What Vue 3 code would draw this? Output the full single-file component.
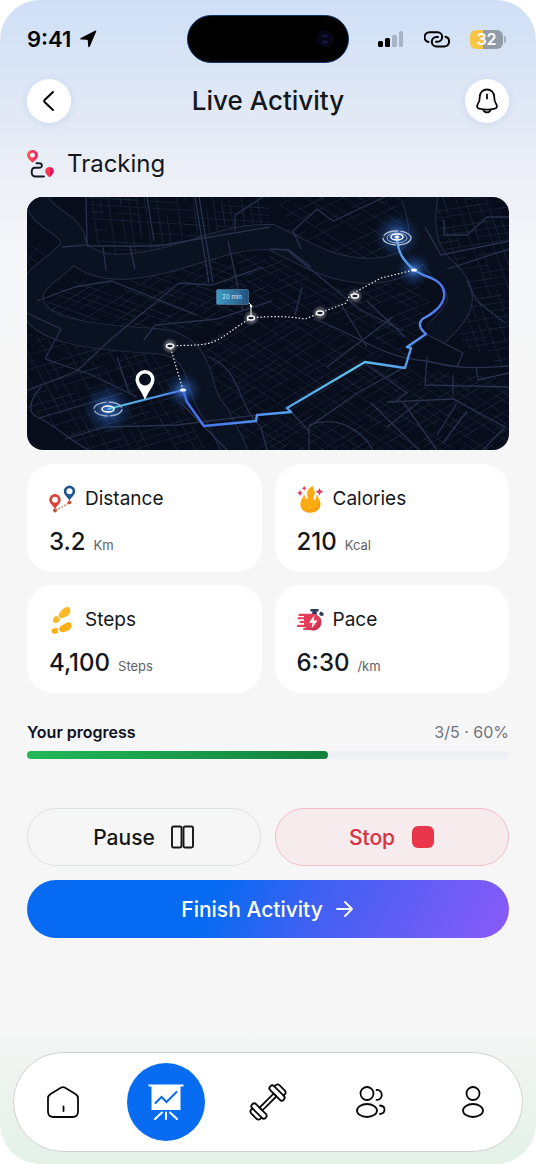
<script setup>
import { ref } from 'vue'

const activeTab = ref('activity')
const paused = ref(false)

// fill runs a little ahead of the whole-step percentage
const progress = { done: 3, total: 5, percent: 60, fill: 62.5 }

const stats = [
  { id: 'distance', label: 'Distance', value: '3.2', unit: 'Km' },
  { id: 'calories', label: 'Calories', value: '210', unit: 'Kcal' },
  { id: 'steps', label: 'Steps', value: '4,100', unit: 'Steps' },
  { id: 'pace', label: 'Pace', value: '6:30', unit: '/km' },
]

const tabs = [
  { id: 'home', label: 'Home' },
  { id: 'activity', label: 'Activity' },
  { id: 'workouts', label: 'Workouts' },
  { id: 'friends', label: 'Friends' },
  { id: 'profile', label: 'Profile' },
]

// City blocks: an outline and the directions its streets run in
const blocks = [
  { points: '62,0 243,0 243,36 200,40 150,55 105,66 80,62 66,40', dirs: [[1, 0.06, 8], [0.14, 1, 9]] },
  { points: '0,38 30,60 36,76 0,90', dirs: [[1, 0.7, 7], [-0.7, 1, 11]] },
  { points: '18,100 50,82 105,84 200,58 232,110 190,130 150,134 60,132 24,122', dirs: [[1, -0.62, 8], [1, 0.36, 7]] },
  { points: '0,136 50,150 135,152 155,190 178,253 60,253 0,210', dirs: [[1, -0.3, 8], [0.55, 1, 9]] },
  { points: '160,150 225,122 300,124 380,172 482,182 482,253 215,253 186,190', dirs: [[1, 0.65, 8], [1, -0.6, 7]] },
  { points: '250,0 376,0 374,50 340,66 300,60 262,34', dirs: [[1, 0.62, 9], [1, -0.5, 10]] },
  { points: '205,56 250,60 300,92 384,84 405,100 392,134 380,160 300,118 235,112', dirs: [[1, 0.6, 8], [1, -0.4, 8]] },
  { points: '412,0 482,0 482,172 440,150 420,130 436,90 400,50', dirs: [[1, -0.16, 8], [0.35, 1, 9]] },
]

// Broken parallel lines, long enough to cross the block on any side
const streets = blocks.map((block, b) => {
  const pts = block.points.split(' ').map((p) => p.split(',').map(Number))
  const cx = pts.reduce((sum, p) => sum + p[0], 0) / pts.length
  const cy = pts.reduce((sum, p) => sum + p[1], 0) / pts.length
  let d = ''
  block.dirs.forEach(([dx, dy, gap], k) => {
    const len = Math.hypot(dx, dy)
    const ux = dx / len
    const uy = dy / len
    for (let i = -22; i <= 22; i++) {
      const off = i * gap + ((i * 7 + b * 3 + k) % 4)
      for (let s = -160; s < 160; s += 34) {
        const jog = Math.abs(i * 13 + s * 5 + b * 11) % 9
        if (jog === 2) continue
        const x = cx - uy * off + ux * (s + jog)
        const y = cy + ux * off + uy * (s + jog)
        const run = 24 + jog * 3
        d += `M${x.toFixed(1)} ${y.toFixed(1)}l${(ux * run).toFixed(1)} ${(uy * run).toFixed(1)}`
      }
    }
  })
  return { id: `block-${b}`, points: block.points, d }
})
</script>

<template>
  <main class="screen">

    <!-- Status bar -->
    <div class="status-bar">
      <div class="status-left">
        <span class="clock">9:41</span>
        <svg width="18" height="18" viewBox="0 0 18 18" aria-hidden="true">
          <path d="M17.2 1.6 10.8 16.4Q9.8 18 9.2 16.2L8.8 10.6Q8.7 9.7 7.8 9.7L2 9.4Q.2 8.9 1.8 7.9L16 .8Q17.7.2 17.2 1.6z" fill="#000"/>
        </svg>
      </div>
      <div class="island">
        <svg width="18" height="18" viewBox="0 0 18 18" aria-hidden="true">
          <circle cx="9" cy="9" r="7.5" fill="#060612" stroke="#0e0c28"/>
          <rect x="5.5" y="4.5" width="7" height="3" rx="1.5" fill="#14133c"/>
          <rect x="5.5" y="10.5" width="7" height="3" rx="1.5" fill="#14133c"/>
        </svg>
      </div>
      <div class="status-right">
        <svg width="26" height="18" viewBox="0 0 26 18" aria-hidden="true">
          <rect x="0" y="11" width="5" height="6" rx="1.5" fill="#000"/>
          <rect x="7" y="8" width="5" height="9" rx="1.5" fill="#000"/>
          <rect x="14" y="5" width="5" height="12" rx="1.5" fill="#a8b4c6"/>
          <rect x="21" y="1" width="4" height="16" rx="1.5" fill="#a8b4c6"/>
        </svg>
        <svg width="26" height="17" viewBox="0 0 26 17" fill="none" stroke="#000" stroke-width="2" stroke-linecap="round" aria-hidden="true">
          <path d="M4.5 11A4.9 4.9 0 0 1 5.5 1.3H13.5a4.7 4.7 0 0 1 0 9.4H12"/>
          <path d="M14 6H12.5a4.7 4.7 0 0 0 0 9.4H20.5A4.9 4.9 0 0 0 21.5 5.8"/>
        </svg>
        <div class="battery">32</div>
      </div>
    </div>

    <!-- Header -->
    <header class="header">
      <button class="round-btn" aria-label="Back">
        <svg width="24" height="24" viewBox="0 0 24 24" fill="none" stroke="#000" stroke-width="2" stroke-linecap="round" stroke-linejoin="round" aria-hidden="true">
          <path d="M16 3 7.8 10.8Q6.6 12 7.8 13.2L16 21"/>
        </svg>
      </button>
      <h1 class="title">Live Activity</h1>
      <button class="round-btn" aria-label="Notifications">
        <svg width="26" height="28" viewBox="0 0 26 28" fill="none" stroke="#0c0c0c" stroke-width="1.8" stroke-linecap="round" stroke-linejoin="round" aria-hidden="true">
          <path d="M13 2.5c-4.2 0-7.2 3-7.2 7.2 0 4-.7 5.8-2.2 7.9-1.2 1.8-.4 3.6 1.6 4.1 5 1.3 10.6 1.3 15.6 0 2-.5 2.8-2.3 1.6-4.1-1.5-2.1-2.2-3.9-2.2-7.9 0-4.200-3-7.200-7.200-7.200z"/>
          <path d="M9.5 23.2c1.2 3 5.8 3 7 0M13 7.5v4"/>
        </svg>
      </button>
    </header>

    <section class="tracking">
      <h2 class="tracking-title">
        <svg width="28" height="28" viewBox="0 0 28 28" aria-hidden="true">
          <defs>
            <linearGradient id="pinA"><stop offset="0" stop-color="#fb6054"/><stop offset="1" stop-color="#ee1d62"/></linearGradient>
            <linearGradient id="pinB"><stop offset="0" stop-color="#f33b56"/><stop offset=".5" stop-color="#f33b56"/><stop offset=".5" stop-color="#e6115c"/></linearGradient>
          </defs>
          <path d="M5.5 0C2.4 0 0 2.3 0 5.3c0 2.800 3 5.200 5.500 7.500C8 10.500 11 8.100 11 5.300 11 2.300 8.600 0 5.500 0z" fill="url(#pinA)"/>
          <circle cx="5.5" cy="5.2" r="2.4" fill="#fff"/>
          <path d="M22.5 17c-2.5 0-4.3 1.8-4.3 4.2 0 2.200 2.300 4.300 4.300 6.200 2-1.900 4.300-4 4.300-6.200 0-2.400-1.800-4.200-4.300-4.200z" fill="url(#pinB)"/>
          <path d="M9.5 13.3H12c3.8 0 3.9 4.5 0 4.5H8c-4.3 0-4.5 8.7 0 8.7h9" fill="none" stroke="#161a22" stroke-width="1.9" stroke-linecap="round"/>
        </svg>
        <span>Tracking</span>
      </h2>

      <!-- Map -->
      <svg class="map" viewBox="0 0 482 253" role="img" aria-label="Route map">
        <defs>
          <radialGradient id="glow">
            <stop offset="0" stop-color="#4d8df5" stop-opacity=".85"/>
            <stop offset=".45" stop-color="#2b61b8" stop-opacity=".4"/>
            <stop offset="1" stop-color="#17386f" stop-opacity="0"/>
          </radialGradient>
          <radialGradient id="dotGlow">
            <stop offset="0" stop-color="#fff" stop-opacity=".6"/>
            <stop offset="1" stop-color="#fff" stop-opacity="0"/>
          </radialGradient>
          <linearGradient id="leg1"><stop offset="0" stop-color="#5bc8e8"/><stop offset="1" stop-color="#4a7ef0"/></linearGradient>
          <linearGradient id="leg2" gradientUnits="userSpaceOnUse" x1="156" y1="0" x2="417" y2="0">
            <stop offset="0" stop-color="#456cf0"/>
            <stop offset=".35" stop-color="#5399ec"/>
            <stop offset=".65" stop-color="#5cc6ea"/>
            <stop offset=".88" stop-color="#5596ee"/>
            <stop offset="1" stop-color="#4f72ee"/>
          </linearGradient>
          <linearGradient id="tag"><stop offset="0" stop-color="#3f9bc4"/><stop offset="1" stop-color="#24507f"/></linearGradient>
          <clipPath v-for="s in streets" :id="s.id" :key="s.id"><polygon :points="s.points"/></clipPath>
        </defs>

        <rect width="482" height="253" fill="#070d1a"/>

        <g fill="none" stroke="#1d263c" stroke-width=".7">
          <path v-for="s in streets" :key="s.id" :d="s.d" :clip-path="`url(#${s.id})`"/>
        </g>

        <!-- River -->
        <g fill="none" stroke="#252e48" stroke-width="26">
          <path d="M8 0C16 24 44 26 46 44 50 66 80 72 106 69 160 63 198 38 244 40 282 58 300 72 340 74 402 72 400 38 387 0"/>
          <path d="M46 52C22 78 0 82 4 106 12 134 60 140 128 144 182 148 164 190 190 218L212 262"/>
          <path d="M400-10C392 30 396 56 420 76 446 102 428 118 408 138"/>
        </g>
        <g fill="none" stroke="#0a1120" stroke-width="24">
          <path d="M8 0C16 24 44 26 46 44 50 66 80 72 106 69 160 63 198 38 244 40 282 58 300 72 340 74 402 72 400 38 387 0"/>
          <path d="M46 52C22 78 0 82 4 106 12 134 60 140 128 144 182 148 164 190 190 218L212 262"/>
          <path d="M400-10C392 30 396 56 420 76 446 102 428 118 408 138"/>
        </g>

        <!-- Main roads -->
        <g fill="none" stroke="#29324e" stroke-width="1.3">
          <path d="M168 0 182 86M172 0 186 86M201 44 216 114M59 0 60 48 35 50M76 50 79 73M103 49 108 72M120 0 127 44"/>
          <path d="M60 49H130L243 30M152 86 84 142 50 174 0 194M152 86 185 88 236 70M117 143 128 128 190 122 245 104"/>
          <path d="M10 104 48 90 84 84 170 118M18 162 65 178 110 200M18 162 34 132 0 116M90 160 102 196"/>
          <path d="M14 190C0 206 2 216 10 220 32 230 42 244 62 253M182 160C214 172 210 208 234 230L240 253"/>
          <path d="M38 242 78 230 150 228 230 218M12 221 96 196M154 206 200 253"/>
          <path d="M260 53 332 112 376 134M243 52 262 53 284 70M208 34V18L236 0M274 52 266 34 290 12 306 24 358 0"/>
          <path d="M286 122C330 136 350 160 400 164 438 174 460 170 482 169M399 137 436 156 430 170"/>
          <path d="M376 171 330 196 282 230 282 253M264 215 282 234M282 228C310 218 334 232 346 253"/>
          <path d="M360 205 426 202 478 230 456 253M400 160 398 188 482 190M426 178V198M449 170 451 183 482 176"/>
          <path d="M398 30 414 58 482 44M417 23V38H440L460 20H482M420 72 482 52M440 84 450 104 478 126"/>
          <path d="M314 107 340 150M275 90 268 118M340 104 378 140M300 170 366 120M340 168 380 196 366 206"/>
          <path d="M376 205 410 253M360 230 392 205M344 206 392 253M430 206 410 238M440 214 416 246"/>
        </g>

        <circle cx="81" cy="212" r="26" fill="url(#glow)"/>
        <circle cx="156" cy="193" r="19" fill="url(#glow)"/>
        <circle cx="370" cy="39" r="24" fill="url(#glow)"/>
        <circle cx="387" cy="73" r="18" fill="url(#glow)"/>

        <!-- Alternative route -->
        <path
          d="M156 193 143 149C158 148 170 149 183 146 196 142 208 130 224 121 244 119 260 119 278 122L293 116 319 106 323 98 354 81 387 73"
          fill="none" stroke="#eceef2" stroke-width="1.2" stroke-dasharray="1.5 2"
        />

        <!-- Covered route -->
        <path d="M81 212 156 193" fill="none" stroke="url(#leg1)" stroke-width="2"/>
        <path
          d="M156 193 160 205 177 229 229 224 230 218 264 215 260 211 338 165 378 171 384 151 380 150 399 137C390 130 392 123 399 120 424 106 421 88 404 81 398 79 392 76 387 73 376 63 371 56 370 41"
          fill="none" stroke="url(#leg2)" stroke-width="2.4" stroke-linejoin="round"
        />

        <g fill="none" stroke="#fff">
          <ellipse cx="81" cy="212" rx="14" ry="7" stroke="#9fb2ce" stroke-width="1.3" stroke-dasharray="15 2"/>
          <ellipse cx="81" cy="212" rx="6" ry="3" stroke-width="1.5"/>
          <ellipse cx="370" cy="41" rx="14" ry="7" stroke="#aebdd5" stroke-width="1.3" stroke-dasharray="16 2"/>
          <ellipse cx="370" cy="41" rx="10" ry="5" stroke="#9fb2ce" stroke-width="1"/>
          <ellipse cx="370" cy="40" rx="6" ry="3" stroke-width="1.5"/>
          <path d="M224 120V108L221 105" stroke-width="1"/>
        </g>
        <g fill="#fff">
          <ellipse cx="370" cy="40" rx="2.5" ry="1.5"/>
          <ellipse cx="156" cy="193" rx="3" ry="1.6"/>
          <ellipse cx="387" cy="73" rx="3" ry="1.6"/>
          <circle cx="224" cy="109" r="1.3"/>
        </g>
        <g v-for="p in [[143, 149], [224, 121], [293, 116], [328, 99]]" :key="p[0]">
          <circle :cx="p[0]" :cy="p[1]" r="8" fill="url(#dotGlow)"/>
          <ellipse :cx="p[0]" :cy="p[1]" rx="3.5" ry="2" fill="#1c2230" stroke="#fff" stroke-width="1.5"/>
        </g>

        <path d="M118 173a9.5 9.5 0 0 0-9.5 9.5c0 6 6.5 12 9.5 20.5 3-8.500 9.500-14.500 9.500-20.500A9.500 9.500 0 0 0 118 173zm0 3.400a6 6 0 1 1 0 12 6 6 0 0 1 0-12z" fill="#fff" fill-rule="evenodd"/>

        <rect x="189.5" y="92.5" width="32" height="15" rx="1.5" fill="url(#tag)" stroke="#4d7899" stroke-width=".7"/>
        <text x="205" y="102" text-anchor="middle" class="map-text">20 min</text>
      </svg>
    </section>

    <!-- Stats -->
    <section class="stats">
      <article v-for="stat in stats" :key="stat.id" class="stat">
        <h3 class="stat-head">
          <svg v-if="stat.id === 'distance'" width="28" height="28" viewBox="0 0 28 28" aria-hidden="true">
            <path d="M6.5 25.5 21 17.5" stroke="#d17a5c" stroke-width="1.2" stroke-dasharray="2 1.2"/>
            <path d="M6 9a5.700 5.700 0 0 0-5.700 5.700c0 3.700 3.600 5.500 5.700 9.300 2.100-3.800 5.700-5.600 5.700-9.300A5.700 5.700 0 0 0 6 9z" fill="#dc3f37"/>
            <circle cx="6" cy="14.8" r="3" fill="#fff"/>
            <path d="M20.5.5a5.700 5.700 0 0 0-5.700 5.700c0 3.700 3.600 5.500 5.700 9.300 2.100-3.800 5.700-5.600 5.700-9.300A5.700 5.700 0 0 0 20.500.5z" fill="#22558c"/>
            <circle cx="20.5" cy="6.2" r="3" fill="#fff"/>
            <circle cx="6" cy="25.5" r="1.9" fill="#bd5239"/>
            <circle cx="20.5" cy="17.3" r="1.9" fill="#bd5239"/>
          </svg>
          <svg v-else-if="stat.id === 'calories'" width="28" height="28" viewBox="0 0 28 28" aria-hidden="true">
            <path d="M16.5.7c-6 2.4-7.3 7-5.8 11.2.6 2-1.2 2.7-2 .8-.5-1.6-1-2.6-2.2-3.3.3 2.3-1.4 4-2.3 6C1.2 22 6 27.6 13 27.6c7.400 0 12-5.200 9.800-11.800-.8-2.400-2.500-4-2-6.300-1.500.9-1.800 2.200-1.900 4-.2 1.900-2.100 1.500-2.100-.3 0-3.200 2-5 .5-7.800-1-1.600-1.500-2.800-.8-4.700z" fill="#fdab12"/>
            <path d="M22.8 15.8c2.200 6.600-2.400 11.800-9.800 11.800-3.300 0-6.100-1.200-7.900-3.200 7.500 2.300 15.500-.6 17.700-8.600z" fill="#fb9b10"/>
            <path d="m3 5 1 2 2 1-2 1-1 2-1-2-2-1 2-1zM7.200.8l.8 1.700 1.700.8L8 4.100l-.8 1.700-.8-1.700-1.700-.8 1.700-.8zM22.500 3l1.200 2.600 2.600 1.200L23.700 8l-1.200 2.600L21.300 8l-2.600-1.200 2.600-1.200z" fill="#e23b5b"/>
          </svg>
          <svg v-else-if="stat.id === 'steps'" width="28" height="28" viewBox="0 0 28 28" aria-hidden="true">
            <path d="M19.8 1.3c2.5 1.2 1.7 5.3-.2 7.8-1.4 2-3.7 1.5-5.3 2.7-1.5 1-2.8.5-3.9-.6-1-1-1-2.3 0-3.7C12.5 4 16.3-.2 19.8 1.3zM7.5 9.8l3.8 3.500c-1 2.200-3 4-5 3.800-2-.3-2.900-2-2-4 .5-1.500 1.500-2.800 3.200-3.300z" fill="#fbb928"/>
            <path d="M22 17.5c1.5 2.7-.3 5.8-3.3 7.3-3.5 1.8-6.7 2-8.1 0-1-1.6-.4-3.8 1.3-4.8 1.5-.9 2.5-1.4 4.3-2.5 2.2-1.3 4.6-1.7 5.8 0zM8 21.7l1.4 4.900c-1.900 1.200-4.700 1.500-6 .3-1.500-1.300-1-3.600.8-4.500 1.200-.6 2.500-.8 3.800-.7z" fill="#fdaf16"/>
          </svg>
          <svg v-else width="28" height="28" viewBox="0 0 28 28" aria-hidden="true">
            <path d="M13.5 3h8v2.5h-2l.5 3h-5l.5-3h-2zM22 8l1.500-2.500 3 1.500v2.500L24 10z" fill="#33365f"/>
            <path d="M2.5 7.8H16A8.300 8.300 0 1 1 13.500 24H7a1 1 0 0 1 0-2h1.500v-1H1a1 1 0 0 1 0-2.200h6V17H3.500a1 1 0 0 1 0-2H7v-1.800H1.500a1 1 0 0 1 0-2H7V10H2.500a1.100 1.100 0 0 1 0-2.200z" fill="#e43d59"/>
            <path d="M23 11.5c3.5 6-.5 12.8-6.5 12.8-2.5 0-4-.6-5.5-1.8 7 .7 11.5-4 12-11z" fill="#cb3152"/>
            <path d="m17.5 9-5.5 7.8h3.7l-1.2 5.6 5.9-8h-3.8z" fill="#fff"/>
          </svg>
          <span>{{ stat.label }}</span>
        </h3>
        <p class="stat-value">
          <span>{{ stat.value }}</span>
          <span class="unit">{{ stat.unit }}</span>
        </p>
      </article>
    </section>

    <!-- Progress -->
    <section class="progress">
      <div class="progress-head">
        <span id="progress-label" class="progress-label">Your progress</span>
        <span class="progress-count">{{ progress.done }}/{{ progress.total }} · {{ progress.percent }}%</span>
      </div>
      <div class="track" role="progressbar" aria-labelledby="progress-label" :aria-valuenow="progress.percent" aria-valuemin="0" aria-valuemax="100">
        <div class="bar" :style="{ width: progress.fill + '%' }"></div>
      </div>
    </section>

    <!-- Actions -->
    <section class="actions">
      <button class="btn btn--pause" :aria-pressed="paused" @click="paused = !paused">
        <span>Pause</span>
        <svg width="24" height="24" viewBox="0 0 24 24" fill="none" stroke="#161616" stroke-width="1.9" aria-hidden="true">
          <rect x="1" y="1.5" width="9.5" height="21" rx="1.5"/>
          <rect x="12.5" y="1.5" width="9.5" height="21" rx="1.5"/>
        </svg>
      </button>
      <button class="btn btn--stop">
        <span>Stop</span>
        <svg width="24" height="24" viewBox="0 0 24 24" aria-hidden="true">
          <rect x="1" y="1" width="22" height="22" rx="6" fill="#e9364a"/>
        </svg>
      </button>
      <button class="btn btn--finish">
        <span>Finish Activity</span>
        <svg width="20" height="20" viewBox="0 0 20 20" fill="none" stroke="#fff" stroke-width="1.8" stroke-linecap="round" stroke-linejoin="round" aria-hidden="true">
          <path d="M2 10h15M10 3l7 7-7 7"/>
        </svg>
      </button>
    </section>

    <!-- Bottom navigation -->
    <nav class="tab-bar" aria-label="Main">
      <button
        v-for="tab in tabs"
        :key="tab.id"
        :class="['tab', activeTab === tab.id ? 'tab--active' : '']"
        :aria-label="tab.label"
        :aria-current="activeTab === tab.id ? 'page' : undefined"
        @click="activeTab = tab.id"
      >
        <svg width="38" height="38" viewBox="0 0 38 38" fill="none" stroke="currentColor" stroke-width="1.8" stroke-linecap="round" stroke-linejoin="round" aria-hidden="true">
          <template v-if="tab.id === 'home'">
            <path d="M16.8 4.8 6.2 11.2Q4 12.8 4 15v13.5Q4 34 9.5 34h19q5.500 0 5.500-5.500V15q0-2.200-2.200-3.800L21.200 4.800Q19 3.400 16.800 4.800z"/>
            <path d="M19.500 23.500v4.500"/>
          </template>
          <template v-else-if="tab.id === 'activity'">
            <path d="M1.5 1.5h35v2h-3V27H4.500V3.500h-3z" fill="currentColor" stroke="none"/>
            <path d="m8.5 20 6-6 5 5L29.500 9" stroke="#086cf2" stroke-width="2" stroke-linejoin="miter"/>
            <path d="M15 29.5 8 36M19 29.5V36M23 29.5l7 6.500" stroke-width="2"/>
          </template>
          <template v-else-if="tab.id === 'workouts'">
            <g transform="rotate(-45 19 19)">
              <path d="M9 17h20v4H9z"/>
              <rect x="3.500" y="9.5" width="5.5" height="19" rx="2.6"/>
              <rect x="29" y="9.5" width="5.5" height="19" rx="2.6"/>
              <path d="M3.5 12.5H2.300q-3.300 0-3.300 3v7q0 3 3.300 3h1.200M34.500 12.500h1.200q3.300 0 3.300 3v7q0 3-3.300 3h-1.200"/>
            </g>
          </template>
          <template v-else-if="tab.id === 'friends'">
            <circle cx="15" cy="10.5" r="6.5"/>
            <ellipse cx="15" cy="27.5" rx="10" ry="6.5"/>
            <path d="M24.5 7c7-.8 7 10.600 0 9.800M28 22.500c6 .8 6 7.500 0 8.500"/>
          </template>
          <template v-else>
            <circle cx="19" cy="10.5" r="6.5"/>
            <ellipse cx="19" cy="27.5" rx="10" ry="6.5"/>
          </template>
        </svg>
      </button>
    </nav>

  </main>
</template>

<style>
body {
  margin: 0;
  background: #fff;
}
</style>

<style scoped>
.screen {
  box-sizing: border-box;
  min-height: 100vh;
  display: flex;
  flex-direction: column;
  padding: 15px 27px 12px;
  border-radius: 40px;
  overflow: hidden;
  font-family: Inter, "Liberation Sans", sans-serif;
  color: #14171c;
  background: linear-gradient(180deg, #cfdff6 0, #dde7f5 90px, #e9edf6 155px, #f6f7f9 260px, #f6f6f6 400px, #f6f6f6 88%, #e3f1e7 100%);
}

button {
  font-family: inherit;
  cursor: pointer;
}

/* Status bar */
.status-bar {
  display: grid;
  grid-template-columns: 1fr auto 1fr;
  align-items: center;
}
.status-left {
  display: flex;
  align-items: center;
  gap: 8px;
}
.clock {
  font-size: 22px;
  font-weight: 600;
  color: #000;
}
.island {
  box-sizing: border-box;
  width: 162px;
  height: 48px;
  display: flex;
  align-items: center;
  justify-content: flex-end;
  padding-right: 14px;
  border: 1px solid #0e3468;
  border-radius: 24px;
  background: #000;
}
.status-right {
  display: flex;
  align-items: center;
  justify-content: flex-end;
  gap: 20px;
  padding-right: 6px;
}
.battery {
  position: relative;
  width: 33px;
  height: 19px;
  border-radius: 6px;
  font-size: 16px;
  font-weight: 600;
  line-height: 19px;
  text-align: center;
  color: #fff;
  background: linear-gradient(90deg, #f8c546 40%, #929ca9 40%);
}
.battery::after {
  content: "";
  position: absolute;
  top: 6px;
  right: -3px;
  width: 2px;
  height: 7px;
  border-radius: 0 2px 2px 0;
  background: #a3adba;
}

/* Header */
.header {
  display: flex;
  align-items: center;
  justify-content: space-between;
  margin-top: 16px;
}
.round-btn {
  width: 44px;
  height: 44px;
  display: flex;
  align-items: center;
  justify-content: center;
  padding: 0;
  border: none;
  border-radius: 50%;
  background: #fff;
  box-shadow: 0 2px 10px rgba(70, 120, 190, 0.14);
}
.title {
  margin: 0;
  font-size: 26px;
  font-weight: 500;
  line-height: 32px;
}

/* Tracking */
.tracking {
  margin-top: 26px;
}
.tracking-title {
  display: flex;
  align-items: center;
  gap: 12px;
  margin: 0 0 18px;
  font-size: 24px;
  font-weight: 400;
  line-height: 30px;
}
.map {
  display: block;
  width: 100%;
  height: auto;
  border-radius: 16px;
}
.map-text {
  font-size: 6px;
  fill: #d5ecf8;
}

/* Stats */
.stats {
  display: grid;
  grid-template-columns: 1fr 1fr;
  gap: 13px;
  margin-top: 14px;
}
.stat {
  padding: 21px 22px 15px;
  border-radius: 26px;
  background: #fff;
}
.stat-head {
  display: flex;
  align-items: center;
  gap: 8px;
  margin: 0;
  font-size: 19px;
  font-weight: 400;
  line-height: 28px;
}
.stat-value {
  display: flex;
  align-items: baseline;
  gap: 8px;
  margin: 14px 0 0;
  font-size: 24px;
  font-weight: 500;
  line-height: 30px;
}
.unit {
  font-size: 13px;
  font-weight: 400;
  line-height: 16px;
  color: #5c5f63;
}

/* Progress */
.progress {
  margin-top: 29px;
}
.progress-head {
  display: flex;
  justify-content: space-between;
  font-size: 16px;
  line-height: 20px;
}
.progress-label {
  font-weight: 600;
  color: #0d1020;
}
.progress-count {
  color: #70757d;
}
.track {
  height: 8px;
  margin-top: 9px;
  border-radius: 4px;
  background: #edf1f5;
}
.bar {
  height: 100%;
  border-radius: 4px;
  background: linear-gradient(90deg, #22b858, #12803c);
}

/* Actions */
.actions {
  display: grid;
  grid-template-columns: 1fr 1fr;
  gap: 14px;
  margin: 49px 0 24px;
}
.btn {
  box-sizing: border-box;
  height: 58px;
  display: flex;
  align-items: center;
  justify-content: center;
  gap: 16px;
  border: 1px solid #dde3e1;
  border-radius: 29px;
  font-size: 21px;
  font-weight: 500;
  color: #161616;
  background: transparent;
}
.btn--stop {
  border-color: #f5bcc4;
  color: #d92f41;
  background: #f7eced;
}
.btn--finish {
  grid-column: 1 / -1;
  gap: 12px;
  border: none;
  color: #fff;
  background: linear-gradient(115deg, #066bf2 38%, #3d61f2 58%, #8a5af8 100%);
}

/* Bottom navigation */
.tab-bar {
  display: flex;
  align-items: center;
  justify-content: space-between;
  margin: auto -14px 0;
  padding: 10px;
  border: 1px solid #d0d2d2;
  border-radius: 50px;
  background: #fff;
}
.tab {
  width: 78px;
  height: 78px;
  display: flex;
  align-items: center;
  justify-content: center;
  padding: 0;
  border: none;
  border-radius: 50%;
  color: #080808;
  background: none;
}
.tab--active {
  color: #fff;
  background: #086cf2;
}
</style>
